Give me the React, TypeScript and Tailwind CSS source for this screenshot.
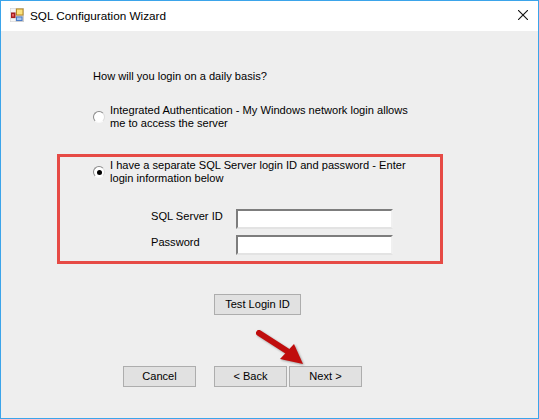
import React from 'react';

function WizardIcon() {
  return (
    <svg width="14" height="14" viewBox="0 0 14 14" className="mb-[2px] block">
      <rect x="0" y="0" width="14" height="14" fill="#cfcfcf" />
      <rect x="0.5" y="0.5" width="5" height="3.5" fill="#f6f6f6" />
      <rect x="6" y="0.5" width="7.5" height="7" fill="#b98a22" />
      <rect x="7" y="1.5" width="5.5" height="5" fill="#fbe27e" />
      <rect x="0.5" y="4.5" width="5" height="6" fill="#f2f2f2" />
      <rect x="1" y="4.5" width="4.5" height="5.5" fill="#a51f1f" />
      <rect x="2" y="6" width="2" height="2.5" fill="#e66060" />
      <rect x="6" y="8.5" width="6.5" height="4.5" fill="#4a7cc8" />
      <rect x="7" y="9.5" width="4.5" height="2.5" fill="#a8c8f0" />
      <rect x="0.5" y="11" width="5" height="2.5" fill="#f6f6f6" />
    </svg>
  );
}

function Radio({ checked }: { checked?: boolean }) {
  return (
    <span className="flex h-[12px] w-[12px] shrink-0 items-center justify-center rounded-full border border-[#8a8a8a] border-r-[#dcdcdc] border-b-[#fafafa] bg-white">
      {checked && <span className="h-[5px] w-[5px] rounded-full bg-black" />}
    </span>
  );
}

function WinButton({ label, className }: { label: string; className: string }) {
  return (
    <button
      type="button"
      className={`h-[21px] border border-[#adadad] bg-[#e1e1e1] text-center text-black ${className}`}
    >
      {label}
    </button>
  );
}

function Field({ label }: { label: string }) {
  return (
    <div className="flex items-start">
      <span className="w-[85px] leading-[14px]">{label}</span>
      <input
        type="text"
        className="h-[20px] w-[157px] border-2 border-[#7d7d7d] border-r-[#f0f0f0] border-b-[#e3e3e3] bg-white outline-none"
      />
    </div>
  );
}

export default function App() {
  return (
    <div
      className="relative flex h-[419px] w-[539px] flex-col overflow-hidden border border-[#3ba4ea] bg-[#eeeeee] text-[11.1px] text-black"
      style={{ fontFamily: '"Liberation Sans", Arial, sans-serif' }}
    >
      {/* Title bar */}
      <div className="flex h-[30px] shrink-0 items-center bg-white pl-[9px] pr-[10px]">
        <WizardIcon />
        <span className="ml-[6px] text-[11.75px]">SQL Configuration Wizard</span>
        <svg width="10" height="10" viewBox="0 0 10 10" className="mb-[2px] ml-auto">
          <path d="M0 0L10 10M10 0L0 10" stroke="#111" strokeWidth="1.1" fill="none" />
        </svg>
      </div>

      <div className="flex flex-1 flex-col pt-[38px]">
        <p className="ml-[92px] leading-[14px]">How will you login on a daily basis?</p>

        <div className="ml-[92px] mt-[21px] flex items-center gap-[5px]">
          <Radio />
          <span className="w-[305px] leading-[13px]">
            Integrated Authentication - My Windows network login allows me to access the server
          </span>
        </div>

        {/* Red highlight box */}
        <div className="ml-[56px] mt-[24px] h-[110px] w-[386px] border-[3px] border-[#e64a45] pl-[33px] pt-[2px]">
          <div className="flex items-center gap-[5px]">
            <Radio checked />
            <span className="w-[305px] leading-[13px]">
              I have a separate SQL Server login ID and password - Enter login information below
            </span>
          </div>
          <div className="ml-[58px] mt-[24px] flex flex-col gap-[6px]">
            <Field label="SQL Server ID" />
            <Field label="Password" />
          </div>
        </div>

        <WinButton label="Test Login ID" className="ml-[213px] mt-[30px] w-[87px]" />

        <div className="ml-[122px] mt-[51px] flex">
          <WinButton label="Cancel" className="w-[73px]" />
          <WinButton label="< Back" className="ml-[18px] w-[73px]" />
          <WinButton label="Next >" className="ml-[2px] w-[73px]" />
        </div>
      </div>

      {/* Annotation arrow */}
      <svg
        width="60"
        height="40"
        viewBox="0 0 60 40"
        className="absolute left-[250px] top-[328px]"
        style={{ filter: 'drop-shadow(1px 1px 1px rgba(60,60,60,0.45))' }}
      >
        <path d="M8 4L36 22" stroke="#c00d0d" strokeWidth="6" strokeLinecap="round" fill="none" />
        <path d="M52 35L29 30L43 15Z" fill="#c00d0d" />
      </svg>
    </div>
  );
}
